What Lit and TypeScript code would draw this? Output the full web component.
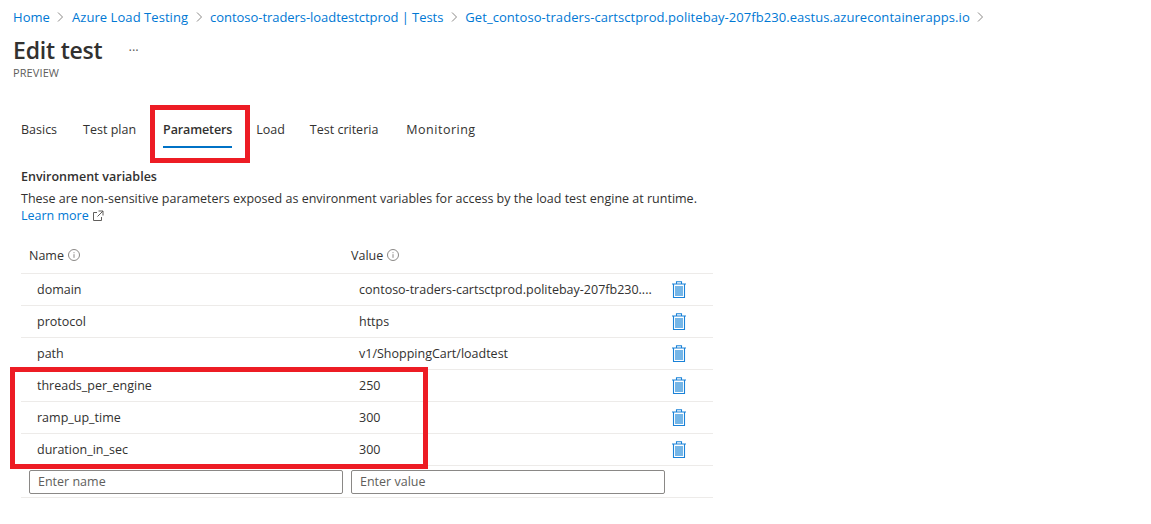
import { LitElement, html, css, svg } from 'lit';
import { customElement } from 'lit/decorators.js';
import type { TemplateResult } from 'lit';

const crumbs = [
  'Home',
  'Azure Load Testing',
  'contoso-traders-loadtestctprod | Tests',
  'Get_contoso-traders-cartsctprod.politebay-207fb230.eastus.azurecontainerapps.io',
];

const tabs = ['Basics', 'Test plan', 'Parameters', 'Load', 'Test criteria', 'Monitoring'];

const rows = [
  ['domain', 'contoso-traders-cartsctprod.politebay-207fb230....'],
  ['protocol', 'https'],
  ['path', 'v1/ShoppingCart/loadtest'],
  ['threads_per_engine', '250'],
  ['ramp_up_time', '300'],
  ['duration_in_sec', '300'],
];

const chevron = svg`<svg width="7" height="10" viewBox="0 0 7 10"><path d="M1 .5 5.500 5 1 9.500" fill="none" stroke="#8a8886" stroke-width="1"/></svg>`;

const info = svg`<svg class="info" width="12" height="12" viewBox="0 0 12 12"><circle cx="6" cy="6" r="5.500" fill="none" stroke="#8a8886"/><path d="M6 5.200v3.600M6 3.200v1" stroke="#8a8886" fill="none"/></svg>`;

const external = svg`<svg class="ext" width="11" height="11" viewBox="0 0 11 11"><path d="M4 2.500H.5v8h8V7M5.500 1h4.500v4.500M10 1 4.500 6.500" fill="none" stroke="#605e5c"/></svg>`;

const trash = svg`<svg width="14" height="17" viewBox="0 0 14 17"><rect x="3" y="5" width="8" height="10" fill="#75b6e7"/><path d="M1.500 3.500v13h11v-13M0 3h14M4.500 3V.75h5V3" fill="none" stroke="#1a82d8" stroke-width="1.100"/></svg>`;

@customElement('app-root')
export class AppRoot extends LitElement
{
  static styles = css`
    :host {
      display: block;
      position: relative;
      height: 524px;
      overflow: hidden;
      background: #fff;
      color: #323130;
      font-family: "Open Sans", "Noto Sans", sans-serif;
      font-size: 12.5px;
    }
    .breadcrumb {
      display: flex;
      align-items: center;
      gap: 7.5px;
      height: 18px;
      padding: 8px 0 0 13px;
      color: #0078d4;
      font-size: 13px;
      letter-spacing: 0.06px;
    }
    .breadcrumb span:nth-of-type(3) {
      letter-spacing: -0.05px;
    }
    .title-row {
      display: flex;
      align-items: center;
      height: 30px;
      padding: 9px 0 0 13px;
    }
    h1 {
      margin: 0;
      font-size: 23px;
      font-weight: 600;
      letter-spacing: -0.2px;
      line-height: 30px;
    }
    .more {
      margin-left: 26px;
      color: #605e5c;
      font-size: 13px;
      line-height: 20px;
    }
    .preview {
      padding: 0 0 0 13px;
      color: #605e5c;
      font-size: 11px;
      line-height: 16px;
      letter-spacing: 0.1px;
    }
    .tabs {
      display: flex;
      margin: 33px 0 0 21px;
      height: 36px;
    }
    .tab {
      line-height: 32px;
      white-space: nowrap;
    }
    .tab:last-child {
      letter-spacing: 0.5px;
    }
    .tab.selected {
      font-weight: 600;
      border-bottom: 2px solid #0072c6;
      height: 32px;
      letter-spacing: -0.12px;
    }
    .env {
      padding: 17px 0 0 21px;
    }
    h2 {
      margin: 0;
      font-size: 12.5px;
      font-weight: 600;
      line-height: 20px;
    }
    .desc {
      margin: 3px 0 0;
      line-height: 17px;
    }
    .learn {
      display: flex;
      align-items: center;
      gap: 4px;
      color: #0078d4;
      line-height: 17px;
    }
    .table {
      margin: 15px 0 0 21px;
      width: 692px;
    }
    .head, .row {
      display: grid;
      grid-template-columns: 322px 329px 41px;
      align-items: center;
      border-bottom: 1px solid #edebe9;
    }
    .head {
      height: 32px;
      padding-bottom: 2px;
    }
    .row {
      height: 31px;
    }
    .head > div {
      display: flex;
      align-items: center;
      gap: 4px;
      padding-left: 8px;
    }
    .cell {
      padding-left: 16px;
      white-space: nowrap;
    }
    .act {
      display: flex;
    }
    .inputs {
      display: grid;
      grid-template-columns: 322px 330px;
      height: 31px;
      align-items: center;
      border-bottom: 1px solid #edebe9;
    }
    input {
      box-sizing: border-box;
      display: block;
      margin-left: 8px;
      width: 314px;
      height: 24px;
      padding: 0 8px;
      border: 1px solid #8a8886;
      border-radius: 2px;
      background: #fff;
      color: #323130;
      font: inherit;
      outline: none;
    }
    input::placeholder {
      color: #605e5c;
      opacity: 1;
    }
    .mark {
      position: absolute;
      box-sizing: border-box;
      border: 5px solid #ed1c24;
      pointer-events: none;
    }
    .mark.tab-mark {
      left: 150px;
      top: 105px;
      width: 100px;
      height: 58px;
    }
    .mark.rows-mark {
      left: 10px;
      top: 367px;
      width: 418px;
      height: 102px;
    }
  `;

  private tabGaps = [26, 27, 24, 25, 28, 0];

  private tabTemplate(label: string, index: number): TemplateResult
  {
    const selected = label === 'Parameters';
    return html`<div class="tab ${selected ? 'selected' : ''}" style="margin-right:${this.tabGaps[index]}px">${label}</div>`;
  }

  private rowTemplate(row: string[]): TemplateResult
  {
    return html`
      <div class="row">
        <div class="cell">${row[0]}</div>
        <div class="cell">${row[1]}</div>
        <div class="act">${trash}</div>
      </div>
    `;
  }

  render(): TemplateResult
  {
    return html`
      <nav class="breadcrumb">
        ${crumbs.map((c) => html`<span>${c}</span>${chevron}`)}
      </nav>
      <div class="title-row">
        <h1>Edit test</h1>
        <span class="more">···</span>
      </div>
      <div class="preview">PREVIEW</div>
      <div class="tabs">${tabs.map((t, i) => this.tabTemplate(t, i))}</div>
      <section class="env">
        <h2>Environment variables</h2>
        <p class="desc">These are non-sensitive parameters exposed as environment variables for access by the load test engine at runtime.</p>
        <div class="learn">Learn more ${external}</div>
      </section>
      <div class="table">
        <div class="head">
          <div>Name ${info}</div>
          <div>Value ${info}</div>
        </div>
        ${rows.map((r) => this.rowTemplate(r))}
        <div class="inputs">
          <input placeholder="Enter name" />
          <input placeholder="Enter value" />
        </div>
      </div>
      <div class="mark tab-mark"></div>
      <div class="mark rows-mark"></div>
    `;
  }
}
